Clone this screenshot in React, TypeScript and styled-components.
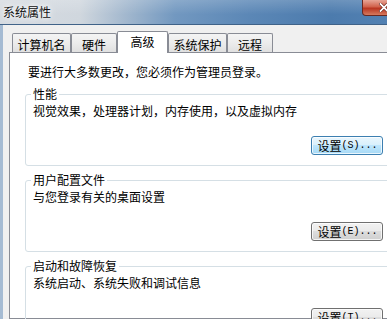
import React from "react";
import styled, { createGlobalStyle } from "styled-components";

const Global = createGlobalStyle`
  html, body { margin: 0; padding: 0; background: #f0f0f0; }
  body { width: 387px; height: 319px; overflow: hidden; }
`;

const Window = styled.div`
  width: 408px;
  height: 319px;
  overflow: hidden;
  display: flex;
  flex-direction: column;
  font-family: "Noto Sans CJK SC", "Noto Sans", sans-serif;
  font-size: 12px;
  color: #000;
`;

const TitleBar = styled.div`
  flex: none;
  height: 24px;
  display: flex;
  align-items: flex-start;
  justify-content: space-between;
  background:
    linear-gradient(180deg, rgba(255,255,255,0.18), rgba(255,255,255,0) 60%),
    linear-gradient(90deg, #d6dbe1 0, #d0d7de 80px, #a3b8ce 125px, #7298c0 175px, #5b87b6 250px, #4c7bad 330px, #5583b4 408px);
  border-bottom: 1px solid #3f6288;
`;

const Title = styled.div`
  padding: 5px 0 0 3px;
  line-height: 14px;
  font-size: 12px;
  color: #111;
  text-shadow: 0 0 4px #fff, 0 0 8px #fff;
`;

const CloseButton = styled.div`
  box-sizing: border-box;
  width: 44px;
  height: 16px;
  margin-right: 2px;
  border: 1px solid #6a2820;
  border-top: none;
  border-radius: 0 0 4px 4px;
  background: linear-gradient(180deg, #e7a596, #d1624c 45%, #b93520 55%, #d57a5f);
  display: flex;
  align-items: center;
  justify-content: center;
`;

const Body = styled.div`
  flex: 1;
  display: flex;
  flex-direction: column;
  background: #f0f0f0;
  border-left: 3px solid #a5bbd3;
  padding: 6px 0 0 6px;
  min-height: 0;
`;

const TabStrip = styled.div`
  flex: none;
  height: 21px;
  display: flex;
  align-items: flex-end;
  padding-left: 3px;
`;

const Tab = styled.div<{ $w: number; $active?: boolean }>`
  box-sizing: border-box;
  width: ${(p) => p.$w}px;
  height: ${(p) => (p.$active ? 22 : 19)}px;
  margin-bottom: ${(p) => (p.$active ? -1 : 0)}px;
  position: relative;
  z-index: ${(p) => (p.$active ? 1 : 0)};
  border: 1px solid #898c95;
  border-bottom: none;
  border-radius: 2px 2px 0 0;
  background: ${(p) =>
    p.$active ? "#fff" : "linear-gradient(180deg, #f4f4f4, #ececec 50%, #e0e0e0)"};
  text-align: center;
  line-height: 14px;
  padding-top: ${(p) => (p.$active ? 3 : 4)}px;
  white-space: nowrap;
`;

const Panel = styled.div`
  flex: 1;
  background: #fff;
  border: 1px solid #898c95;
  border-right: none;
  padding: 12px 15px 0 15px;
  display: flex;
  flex-direction: column;
  min-height: 0;
`;

const Intro = styled.div`
  line-height: 14px;
  margin: 0 0 8px 3px;
`;

const Group = styled.fieldset`
  margin: 0 0 7px;
  padding: 0 9px 10px 5px;
  min-width: 0;
  border: 1px solid #d5dfe5;
  border-radius: 3px;
  display: flex;
  flex-direction: column;
`;

const Legend = styled.legend`
  padding: 0 2px;
  line-height: 14px;
  font-size: 12px;
`;

const Desc = styled.div`
  line-height: 14px;
  margin-top: 3px;
  padding-left: 2px;
`;

const ButtonRow = styled.div`
  display: flex;
  justify-content: flex-end;
  margin-top: 18px;
`;

const Button = styled.button<{ $focused?: boolean }>`
  box-sizing: border-box;
  width: 72px;
  height: 19px;
  padding: 0 0 0 1px;
  border: 1px solid ${(p) => (p.$focused ? "#3c7fb1" : "#707070")};
  border-radius: 3px;
  background: ${(p) =>
    p.$focused
      ? "linear-gradient(180deg, #eaf6fd, #d9f0fc 45%, #bee6fd 50%, #a7d9f5)"
      : "linear-gradient(180deg, #f2f2f2, #ebebeb 45%, #dddddd 50%, #cfcfcf)"};
  box-shadow: inset 0 0 0 1px rgba(255, 255, 255, 0.75);
  font-family: "Noto Sans CJK SC", sans-serif;
  font-size: 12px;
  line-height: 17px;
  color: #000;
  display: flex;
  align-items: center;
  justify-content: center;
  white-space: nowrap;
`;

const Mnemonic = styled.span`
  font-family: "Liberation Mono", "DejaVu Sans Mono", monospace;
  font-size: 10px;
  letter-spacing: 0;
`;

const groups = [
  { legend: "性能", desc: "视觉效果，处理器计划，内存使用，以及虚拟内存", key: "S", focused: true },
  { legend: "用户配置文件", desc: "与您登录有关的桌面设置", key: "E" },
  { legend: "启动和故障恢复", desc: "系统启动、系统失败和调试信息", key: "T" },
];

const tabs = [
  { label: "计算机名", w: 59 },
  { label: "硬件", w: 46 },
  { label: "高级", w: 51, active: true },
  { label: "系统保护", w: 59 },
  { label: "远程", w: 46 },
];

export default function App() {
  return (
    <>
      <Global />
      <Window>
        <TitleBar>
          <Title>系统属性</Title>
          <CloseButton>
            <svg width="10" height="9" viewBox="0 0 10 9">
              <path d="M1.5 1 L8.5 8 M8.5 1 L1.5 8" stroke="#5a1a12" strokeWidth="3" strokeLinecap="square" />
              <path d="M1.5 1 L8.5 8 M8.5 1 L1.5 8" stroke="#fff" strokeWidth="1.8" strokeLinecap="square" />
            </svg>
          </CloseButton>
        </TitleBar>
        <Body>
          <TabStrip>
            {tabs.map((t) => (
              <Tab key={t.label} $w={t.w} $active={t.active}>
                {t.label}
              </Tab>
            ))}
          </TabStrip>
          <Panel>
            <Intro>要进行大多数更改，您必须作为管理员登录。</Intro>
            {groups.map((g) => (
              <Group key={g.legend}>
                <Legend>{g.legend}</Legend>
                <Desc>{g.desc}</Desc>
                <ButtonRow>
                  <Button $focused={g.focused}>
                    设置<Mnemonic>({g.key})...</Mnemonic>
                  </Button>
                </ButtonRow>
              </Group>
            ))}
          </Panel>
        </Body>
      </Window>
    </>
  );
}
